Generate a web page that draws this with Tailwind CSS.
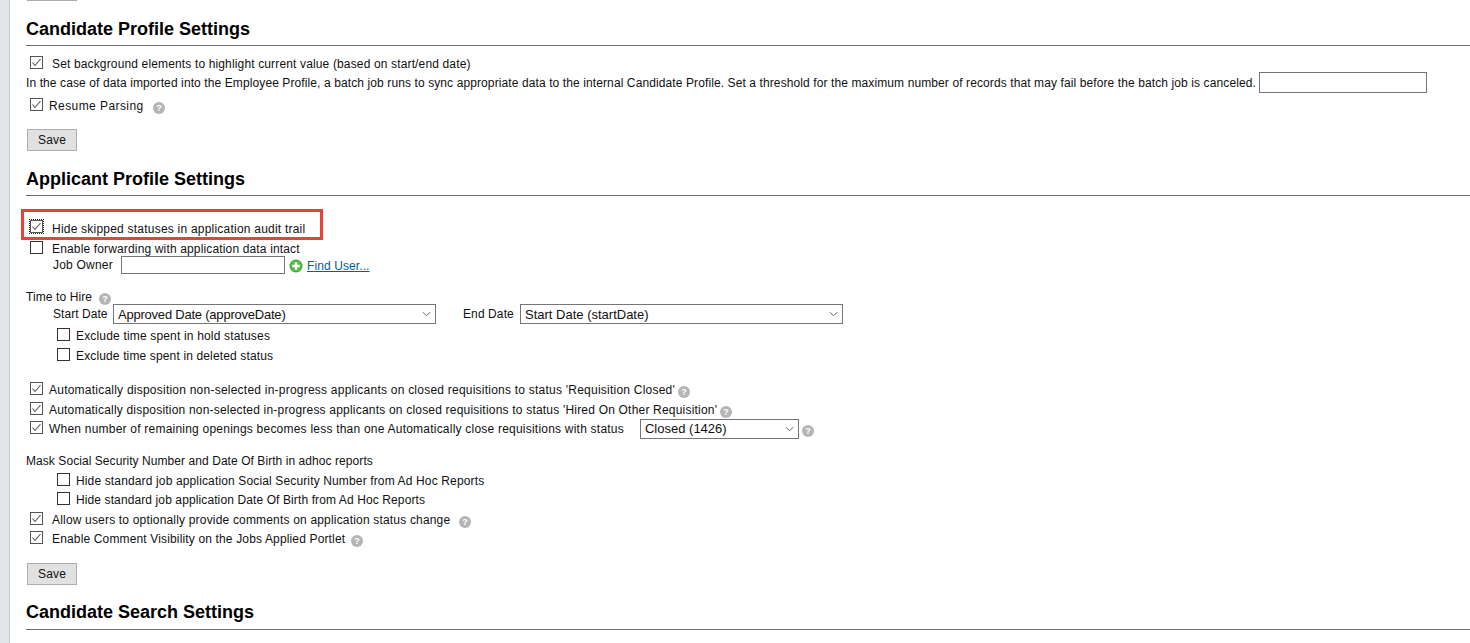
<!DOCTYPE html>
<html lang="en">
<head>
  <meta charset="UTF-8" />
  <title>Settings</title>
  <script src="https://cdn.jsdelivr.net/npm/@tailwindcss/browser@4"></script>
</head>
<body class="bg-white text-[#111] text-[12px] leading-[14px] font-['Liberation_Sans',Arial,sans-serif] overflow-hidden">
  <!-- shared icons -->
  <svg class="hidden">
    <symbol id="box" viewBox="0 0 13 13"><rect x="0.5" y="0.5" width="12" height="12" fill="#fff" stroke="#333"/></symbol>
    <symbol id="checked" viewBox="0 0 13 13"><rect x="0.5" y="0.5" width="12" height="12" fill="#fff" stroke="#555"/><path d="M2.5 6.5 5 9.5 10.5 3" fill="none" stroke="#555" stroke-width="1.1"/></symbol>
    <symbol id="help" viewBox="0 0 12 12"><circle cx="6" cy="6" r="6" fill="#b5b5b5"/><text x="6" y="9.2" text-anchor="middle" font-size="9" font-weight="700" font-family="Liberation Sans" fill="#fff">?</text></symbol>
    <symbol id="chev" viewBox="0 0 10 6"><path d="M1 1 5 5 9 1" fill="none" stroke="#555" stroke-width="1"/></symbol>
  </svg>

  <div class="flex h-[643px]">
    <!-- left rail -->
    <div class="w-[10px] shrink-0 bg-[#e2e5e7] border-r border-[#c9cccf]"></div>

    <main class="flex-1 pl-[16px] min-w-0">
      <div class="ml-[1px] w-[50px] h-[1px] bg-[#aaa]"></div>

      <!-- Candidate Profile Settings -->
      <h2 class="mt-[18px] h-[20px] text-[18px] leading-[20px] font-bold text-black">Candidate Profile Settings</h2>
      <div class="mt-[6px] h-[1px] bg-[#6e6e6e]"></div>

      <div class="mt-[11px] h-[14px] flex items-center pl-[4px]">
        <svg class="w-[13px] h-[13px] -mt-[4px]"><use href="#checked"/></svg>
        <span class="ml-[9px] tracking-[0.145px]">Set background elements to highlight current value (based on start/end date)</span>
      </div>
      <div class="mt-[1px] h-[21px] flex items-center">
        <span class="tracking-[0.104px]">In the case of data imported into the Employee Profile, a batch job runs to sync appropriate data to the internal Candidate Profile. Set a threshold for the maximum number of records that may fail before the batch job is canceled.</span>
        <input type="text" class="ml-[3px] w-[168px] h-[21px] border border-[#767676] bg-white" />
      </div>
      <div class="mt-[6px] h-[14px] flex items-center pl-[4px]">
        <svg class="w-[13px] h-[13px] -mt-[4px]"><use href="#checked"/></svg>
        <span class="ml-[6px] tracking-[0.42px]">Resume Parsing</span>
        <svg class="w-[12px] h-[12px] ml-[9px] mt-[3px]"><use href="#help"/></svg>
      </div>
      <button class="block mt-[16px] ml-[1px] w-[50px] h-[22px] bg-[#e1e1e1] border border-[#adadad] text-center tracking-[0.15px]">Save</button>

      <!-- Applicant Profile Settings -->
      <h2 class="mt-[18px] h-[20px] text-[18px] leading-[20px] font-bold text-black">Applicant Profile Settings</h2>
      <div class="mt-[6px] h-[1px] bg-[#6e6e6e]"></div>

      <div class="mt-[13px] -ml-[5px] w-[302px] h-[31px] border-[3px] border-[#e8403a] flex items-center pl-[6px]">
        <svg class="w-[13px] h-[13px] mt-[4px] outline outline-dotted outline-1 outline-[#222]"><use href="#checked"/></svg>
        <span class="ml-[9px] mt-[8px] tracking-[0.22px]">Hide skipped statuses in application audit trail</span>
      </div>
      <div class="mt-[2px] h-[14px] flex items-center pl-[4px]">
        <svg class="w-[13px] h-[13px] -mt-[4px]"><use href="#box"/></svg>
        <span class="ml-[9px] tracking-[0.15px]">Enable forwarding with application data intact</span>
      </div>
      <div class="h-[18px] flex items-center pl-[27px]">
        <span class="w-[68px] tracking-[0.2px]">Job Owner</span>
        <input type="text" class="w-[164px] h-[18px] border border-[#767676] bg-white" />
        <svg class="w-[14px] h-[14px] ml-[4px] mt-[2px]" viewBox="0 0 14 14"><circle cx="7" cy="7" r="6.5" fill="#3aa535"/><circle cx="7" cy="7" r="5.5" fill="#55bb48"/><path d="M7 3.2v7.6M3.2 7h7.6" stroke="#fff" stroke-width="2.6"/></svg>
        <a href="#" class="ml-[4px] mt-[2px] text-[#0a5c94] underline tracking-[0.1px]">Find User...</a>
      </div>

      <div class="mt-[16px] h-[14px] flex items-center">
        <span class="tracking-[0.1px]">Time to Hire</span>
        <svg class="w-[12px] h-[12px] ml-[7px] mt-[3px]"><use href="#help"/></svg>
      </div>
      <div class="h-[20px] flex items-center pl-[27px]">
        <span class="w-[60px] tracking-[0.05px]">Start Date</span>
        <div class="relative w-[323px] h-[20px]">
          <select class="appearance-none w-full h-full border border-[#767676] bg-white pl-[4px] pt-[1px] text-[13px] tracking-[-0.22px]"><option>Approved Date (approveDate)</option></select>
          <svg class="absolute right-[5px] top-[7px] w-[9px] h-[6px]"><use href="#chev"/></svg>
        </div>
        <span class="ml-[27px] w-[57px] tracking-[0.1px]">End Date</span>
        <div class="relative w-[323px] h-[20px]">
          <select class="appearance-none w-full h-full border border-[#767676] bg-white pl-[4px] pt-[1px] text-[13px]"><option>Start Date (startDate)</option></select>
          <svg class="absolute right-[5px] top-[7px] w-[9px] h-[6px]"><use href="#chev"/></svg>
        </div>
      </div>
      <div class="mt-[5px] h-[14px] flex items-center pl-[31px]">
        <svg class="w-[13px] h-[13px] -mt-[4px]"><use href="#box"/></svg>
        <span class="ml-[6px] tracking-[0.17px]">Exclude time spent in hold statuses</span>
      </div>
      <div class="mt-[6px] h-[14px] flex items-center pl-[31px]">
        <svg class="w-[13px] h-[13px] -mt-[4px]"><use href="#box"/></svg>
        <span class="ml-[6px] tracking-[0.14px]">Exclude time spent in deleted status</span>
      </div>

      <div class="mt-[20px] h-[14px] flex items-center pl-[4px]">
        <svg class="w-[13px] h-[13px] -mt-[4px]"><use href="#checked"/></svg>
        <span class="ml-[6px] tracking-[0.23px]">Automatically disposition non-selected in-progress applicants on closed requisitions to status 'Requisition Closed'</span>
        <svg class="w-[12px] h-[12px] ml-[3px] mt-[3px]"><use href="#help"/></svg>
      </div>
      <div class="mt-[6px] h-[14px] flex items-center pl-[4px]">
        <svg class="w-[13px] h-[13px] -mt-[4px]"><use href="#checked"/></svg>
        <span class="ml-[6px] tracking-[0.2px]">Automatically disposition non-selected in-progress applicants on closed requisitions to status 'Hired On Other Requisition'</span>
        <svg class="w-[12px] h-[12px] ml-[3px] mt-[3px]"><use href="#help"/></svg>
      </div>
      <div class="mt-[2px] h-[20px] flex items-center pl-[4px]">
        <svg class="w-[13px] h-[13px] -mt-[4px]"><use href="#checked"/></svg>
        <span class="ml-[6px] tracking-[0.22px]">When number of remaining openings becomes less than one Automatically close requisitions with status</span>
        <div class="relative ml-[16px] w-[159px] h-[20px]">
          <select class="appearance-none w-full h-full border border-[#767676] bg-white pl-[4px] text-[13px]"><option>Closed (1426)</option></select>
          <svg class="absolute right-[5px] top-[7px] w-[9px] h-[6px]"><use href="#chev"/></svg>
        </div>
        <svg class="w-[12px] h-[12px] ml-[3px] mt-[3px]"><use href="#help"/></svg>
      </div>

      <div class="mt-[15px] h-[14px] flex items-center tracking-[0.065px]">Mask Social Security Number and Date Of Birth in adhoc reports</div>
      <div class="mt-[6px] h-[14px] flex items-center pl-[31px]">
        <svg class="w-[13px] h-[13px] -mt-[4px]"><use href="#box"/></svg>
        <span class="ml-[6px] tracking-[0.14px]">Hide standard job application Social Security Number from Ad Hoc Reports</span>
      </div>
      <div class="mt-[5px] h-[14px] flex items-center pl-[31px]">
        <svg class="w-[13px] h-[13px] -mt-[4px]"><use href="#box"/></svg>
        <span class="ml-[6px] tracking-[0.11px]">Hide standard job application Date Of Birth from Ad Hoc Reports</span>
      </div>
      <div class="mt-[6px] h-[14px] flex items-center pl-[4px]">
        <svg class="w-[13px] h-[13px] -mt-[4px]"><use href="#checked"/></svg>
        <span class="ml-[9px] tracking-[0.18px]">Allow users to optionally provide comments on application status change</span>
        <svg class="w-[12px] h-[12px] ml-[9px] mt-[3px]"><use href="#help"/></svg>
      </div>
      <div class="mt-[5px] h-[14px] flex items-center pl-[4px]">
        <svg class="w-[13px] h-[13px] -mt-[4px]"><use href="#checked"/></svg>
        <span class="ml-[9px] tracking-[0.15px]">Enable Comment Visibility on the Jobs Applied Portlet</span>
        <svg class="w-[12px] h-[12px] ml-[6px] mt-[3px]"><use href="#help"/></svg>
      </div>
      <button class="block mt-[17px] ml-[1px] w-[50px] h-[22px] bg-[#e1e1e1] border border-[#adadad] text-center tracking-[0.15px]">Save</button>

      <!-- Candidate Search Settings -->
      <h2 class="mt-[17px] h-[20px] text-[18px] leading-[20px] font-bold text-black">Candidate Search Settings</h2>
      <div class="mt-[7px] h-[1px] bg-[#6e6e6e]"></div>
    </main>
  </div>
</body>
</html>
